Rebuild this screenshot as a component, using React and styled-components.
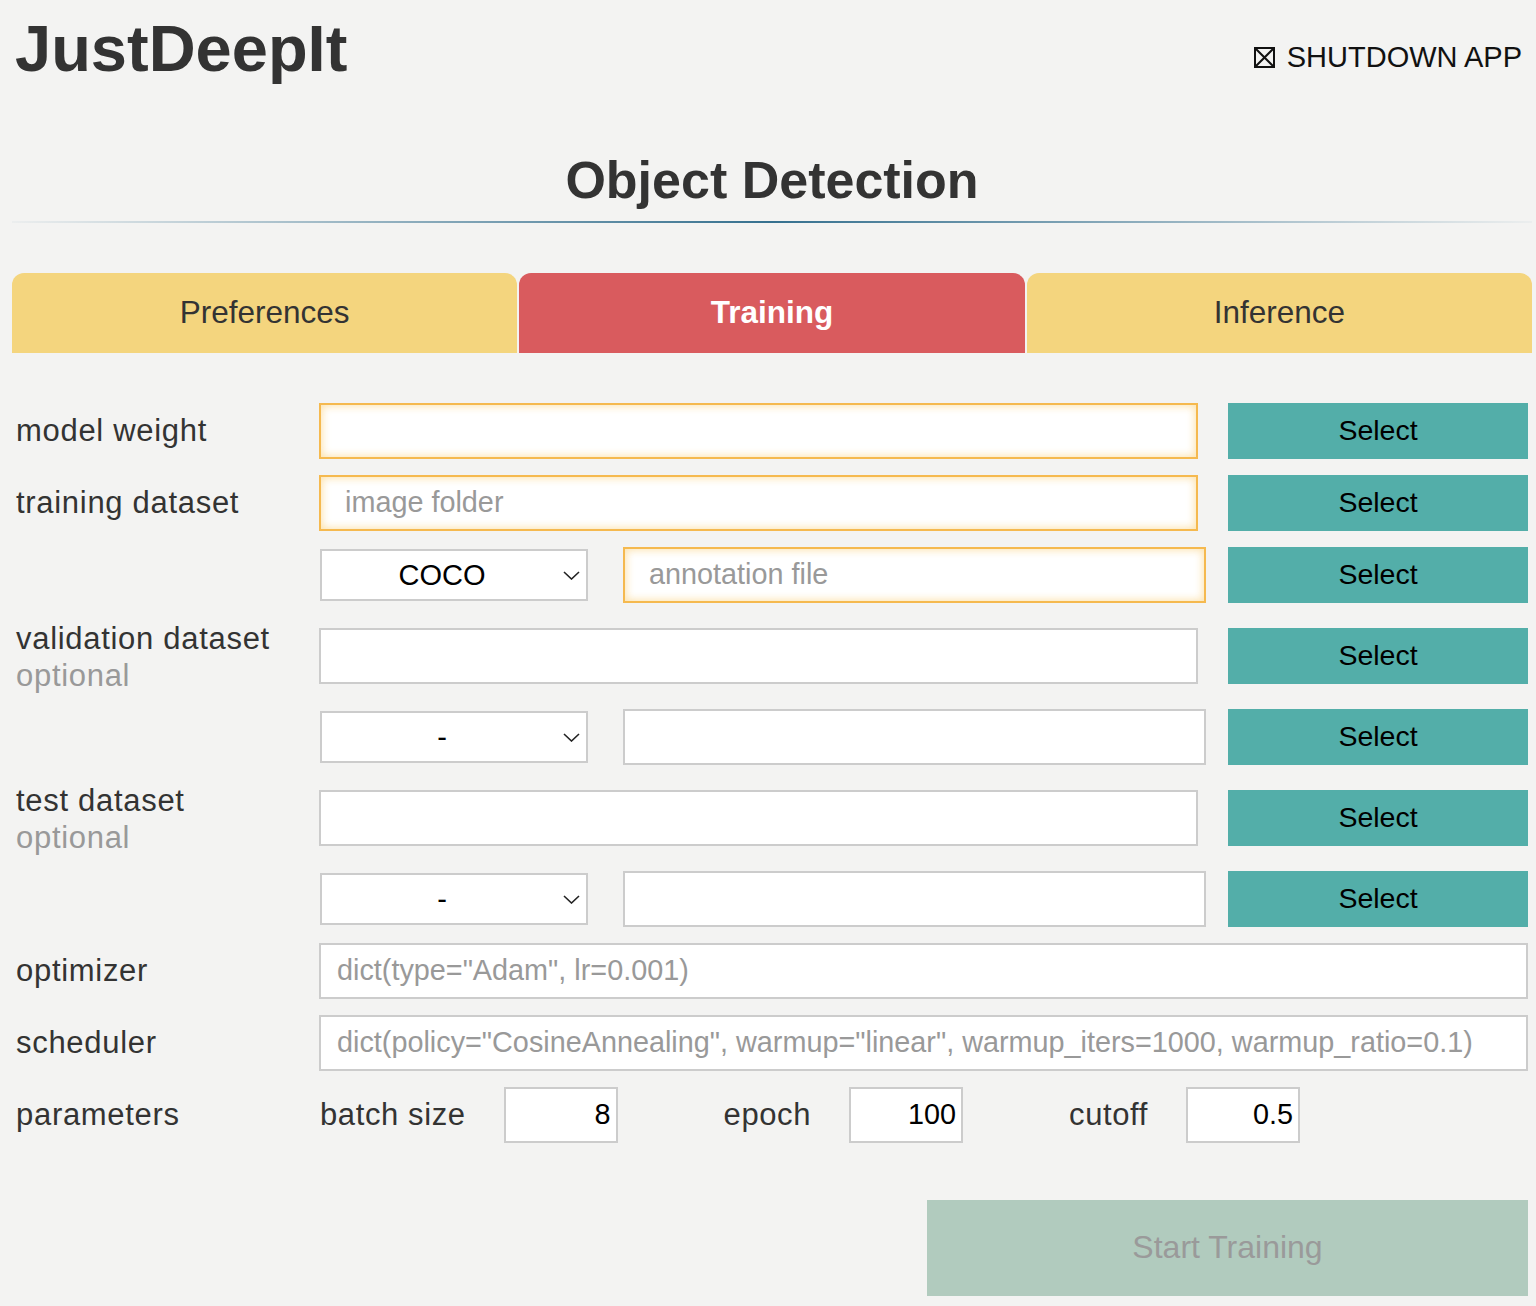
import React from "react";
import styled, { createGlobalStyle } from "styled-components";

const GlobalStyle = createGlobalStyle`
  * {
    box-sizing: border-box;
  }
  body {
    margin: 0;
    background: #f3f3f2;
    color: #333;
    font-family: "Liberation Sans", Arial, Helvetica, sans-serif;
  }
`;

const Page = styled.div`
  padding: 0 4px 12px 12px;
`;

const Header = styled.header`
  display: flex;
  justify-content: space-between;
  align-items: flex-start;
`;

const Brand = styled.h1`
  margin: 12px 0 0 3px;
  font-size: 65px;
  font-weight: 700;
  line-height: 1.15;
  color: #333;
`;

const ShutdownButton = styled.button`
  display: flex;
  align-items: center;
  gap: 12px;
  margin: 41px 10px 0 0;
  padding: 0;
  border: none;
  background: none;
  font-family: inherit;
  font-size: 29px;
  line-height: 32px;
  color: #111;
  cursor: pointer;
`;

const PageTitle = styled.h2`
  margin: 64px 0 0;
  text-align: center;
  font-size: 52px;
  font-weight: 700;
  line-height: 1.15;
  color: #333;
`;

const Divider = styled.div`
  height: 2px;
  margin-top: 10px;
  background: linear-gradient(
    90deg,
    rgba(53, 112, 143, 0.04),
    #35708f 50%,
    rgba(53, 112, 143, 0.04)
  );
`;

const TabBar = styled.nav`
  display: flex;
  gap: 2px;
  margin-top: 50px;
`;

const Tab = styled.button`
  flex: 1;
  height: 80px;
  border: none;
  border-radius: 12px 12px 0 0;
  background: ${p => (p.$active ? "#d95b5e" : "#f4d57e")};
  color: ${p => (p.$active ? "#fff" : "#333")};
  font-family: inherit;
  font-size: 31.5px;
  font-weight: ${p => (p.$active ? 700 : 400)};
  cursor: pointer;
`;

const Form = styled.form`
  display: flex;
  flex-direction: column;
  margin-top: 50px;
  padding: 0 4px;
`;

const Row = styled.div`
  display: grid;
  grid-template-columns: 303px 1fr;
  align-items: center;
  margin-top: ${p => (p.$first ? 0 : p.$wide ? 25 : 16)}px;
`;

const Label = styled.label`
  font-size: 31px;
  letter-spacing: 0.7px;
  color: #333;
  line-height: ${p => (p.$stacked ? "37px" : "normal")};
  align-self: ${p => (p.$stacked ? "start" : "center")};
  margin: ${p => (p.$stacked ? "-8px 0 -26px" : 0)};
`;

const Hint = styled.span`
  display: block;
  color: #999;
`;

const Controls = styled.div`
  display: flex;
  align-items: center;
`;

const TextField = styled.input`
  flex: ${p => (p.$width ? "none" : 1)};
  width: ${p => (p.$width ? `${p.$width}px` : "auto")};
  min-width: 0;
  height: 56px;
  padding: 0 ${p => p.$pad || 16}px;
  border: 2px solid ${p => (p.$required ? "#f5b94f" : "#ccc")};
  border-radius: 0;
  background: #fff;
  box-shadow: ${p =>
    p.$required ? "inset 0 0 9px 1px rgba(250, 200, 100, 0.55)" : "none"};
  font-family: inherit;
  font-size: 28.8px;
  color: #000;
  text-align: ${p => p.$align || "left"};
  outline: none;

  &::placeholder {
    color: #999;
  }
`;

const SelectButton = styled.button`
  flex: none;
  width: 300px;
  height: 56px;
  margin-left: ${p => p.$gap}px;
  border: none;
  background: #53aea9;
  color: #000;
  font-family: inherit;
  font-size: 28.5px;
  cursor: pointer;
`;

const FormatWrap = styled.div`
  position: relative;
  flex: none;
  width: 268px;
  margin: 0 35px 0 1px;
`;

const FormatSelect = styled.select`
  width: 100%;
  height: 52px;
  padding: 0 24px 0 0;
  border: 2px solid #ccc;
  border-radius: 0;
  background: #fff;
  appearance: none;
  -webkit-appearance: none;
  font-family: inherit;
  font-size: 29px;
  color: #000;
  text-align: center;
  text-align-last: center;
  outline: none;
`;

const Chevron = styled.svg`
  position: absolute;
  right: 8px;
  top: 50%;
  width: 17px;
  height: 9px;
  margin-top: -4px;
  pointer-events: none;
`;

const Params = styled.div`
  display: flex;
  align-items: center;
  gap: 106px;
  padding-left: 1px;
`;

const Param = styled.div`
  display: flex;
  align-items: center;
`;

const ParamLabel = styled.span`
  margin-right: 38px;
  font-size: 31px;
  letter-spacing: 0.6px;
  color: #333;
`;

const StartButton = styled.button`
  align-self: flex-end;
  width: 601px;
  height: 96px;
  margin-top: 57px;
  border: none;
  background: #b1cbbe;
  color: #9a9a9a;
  font-family: inherit;
  font-size: 32px;
`;

function ShutdownIcon() {
  return (
    <svg width="21" height="21" viewBox="0 0 21 21" fill="none" stroke="#111" strokeWidth="2">
      <rect x="1" y="1" width="19" height="19" />
      <path d="M2 2 L19 19 M19 2 L2 19" />
    </svg>
  );
}

function FormatPicker({ value, options }) {
  return (
    <FormatWrap>
      <FormatSelect defaultValue={value}>
        {options.map(o => (
          <option key={o}>{o}</option>
        ))}
      </FormatSelect>
      <Chevron viewBox="0 0 17 9" fill="none" stroke="#222" strokeWidth="1.6">
        <path d="M1 1 L8.5 8 L16 1" />
      </Chevron>
    </FormatWrap>
  );
}

function PathRow({ label, hint, placeholder, required, first, wide }) {
  return (
    <Row $first={first} $wide={wide}>
      <Label $stacked={!!hint}>
        {label}
        {hint && <Hint>{hint}</Hint>}
      </Label>
      <Controls>
        <TextField $required={required} $pad={24} placeholder={placeholder} />
        <SelectButton type="button" $gap={30}>Select</SelectButton>
      </Controls>
    </Row>
  );
}

function AnnotationRow({ format, placeholder, required, wide }) {
  return (
    <Row $wide={wide}>
      <span />
      <Controls>
        <FormatPicker value={format} options={["-", "COCO", "VOC"]} />
        <TextField $required={required} $pad={24} placeholder={placeholder} />
        <SelectButton type="button" $gap={22}>Select</SelectButton>
      </Controls>
    </Row>
  );
}

export default function App() {
  return (
    <Page>
      <GlobalStyle />
      <Header>
        <Brand>JustDeepIt</Brand>
        <ShutdownButton type="button">
          <ShutdownIcon />
          SHUTDOWN APP
        </ShutdownButton>
      </Header>

      <PageTitle>Object Detection</PageTitle>
      <Divider />

      <TabBar>
        <Tab type="button">Preferences</Tab>
        <Tab type="button" $active>Training</Tab>
        <Tab type="button">Inference</Tab>
      </TabBar>

      <Form onSubmit={e => e.preventDefault()}>
        <PathRow first label="model weight" required />
        <PathRow label="training dataset" placeholder="image folder" required />
        <AnnotationRow format="COCO" placeholder="annotation file" required />

        <PathRow wide label="validation dataset" hint="optional" />
        <AnnotationRow wide format="-" />

        <PathRow wide label="test dataset" hint="optional" />
        <AnnotationRow wide format="-" />

        <Row>
          <Label>optimizer</Label>
          <TextField placeholder={'dict(type="Adam", lr=0.001)'} />
        </Row>
        <Row>
          <Label>scheduler</Label>
          <TextField
            placeholder={
              'dict(policy="CosineAnnealing", warmup="linear", warmup_iters=1000, warmup_ratio=0.1)'
            }
          />
        </Row>
        <Row>
          <Label>parameters</Label>
          <Params>
            <Param>
              <ParamLabel>batch size</ParamLabel>
              <TextField $width={114} $pad={5} $align="right" defaultValue="8" />
            </Param>
            <Param>
              <ParamLabel>epoch</ParamLabel>
              <TextField $width={114} $pad={5} $align="right" defaultValue="100" />
            </Param>
            <Param>
              <ParamLabel>cutoff</ParamLabel>
              <TextField $width={114} $pad={5} $align="right" defaultValue="0.5" />
            </Param>
          </Params>
        </Row>

        <StartButton type="submit" disabled>Start Training</StartButton>
      </Form>
    </Page>
  );
}
